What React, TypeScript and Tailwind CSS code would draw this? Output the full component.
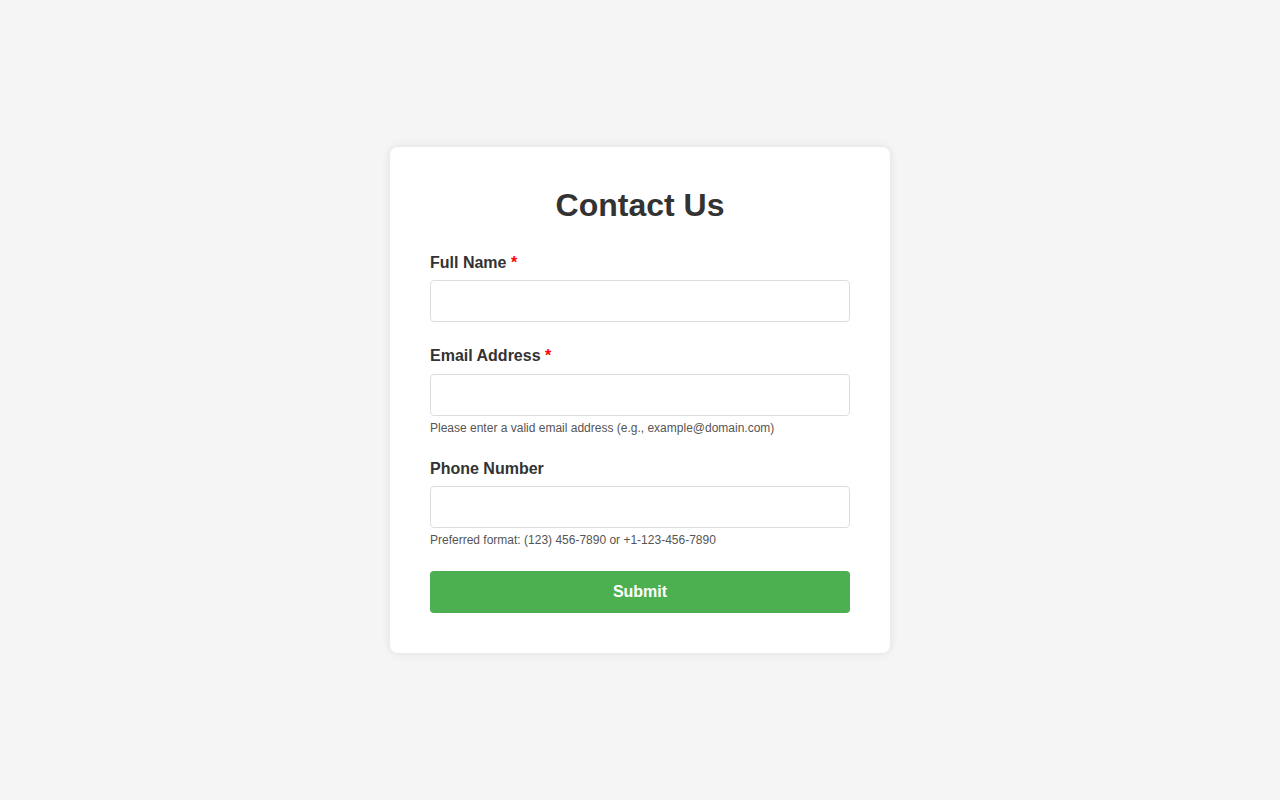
import React from "react";

function Field({
  label,
  required,
  type,
  help,
  last,
}: {
  label: string;
  required?: boolean;
  type: string;
  help?: string;
  last?: boolean;
}) {
  return (
    <div className={last ? "mb-6" : "mb-[25px]"}>
      <label className="block mb-2 text-[16px] font-bold leading-[18.4px] text-[#333]">
        {label}
        {required && <span className="text-[#ff0000]"> *</span>}
      </label>
      <input
        type={type}
        className="block w-full h-[42px] px-[10px] border border-[#dddddd] rounded-[4px] bg-white text-[16px] outline-none"
      />
      {help && (
        <div className="mt-[5px] text-[12px] leading-[14px] text-[#555]">{help}</div>
      )}
    </div>
  );
}

export default function App() {
  return (
    <div
      className="min-h-screen w-full bg-[#f5f5f5] flex items-center justify-center"
      style={{ fontFamily: '"Liberation Sans", Arial, sans-serif' }}
    >
      <div className="w-[500px] bg-white rounded-[8px] p-10 shadow-[0_0_10px_rgba(0,0,0,0.1)]">
        <h1 className="text-center text-[32px] font-bold leading-[37px] text-[#333] mb-[30px]">
          Contact Us
        </h1>
        <form onSubmit={(e) => e.preventDefault()}>
          <Field label="Full Name" required type="text" />
          <Field
            label="Email Address"
            required
            type="email"
            help="Please enter a valid email address (e.g., example@domain.com)"
          />
          <Field
            label="Phone Number"
            type="tel"
            last
            help="Preferred format: (123) 456-7890 or +1-123-456-7890"
          />
          <button
            type="submit"
            className="block w-full h-[42px] rounded-[4px] bg-[#4caf50] text-white text-[16px] font-bold"
          >
            Submit
          </button>
        </form>
      </div>
    </div>
  );
}
